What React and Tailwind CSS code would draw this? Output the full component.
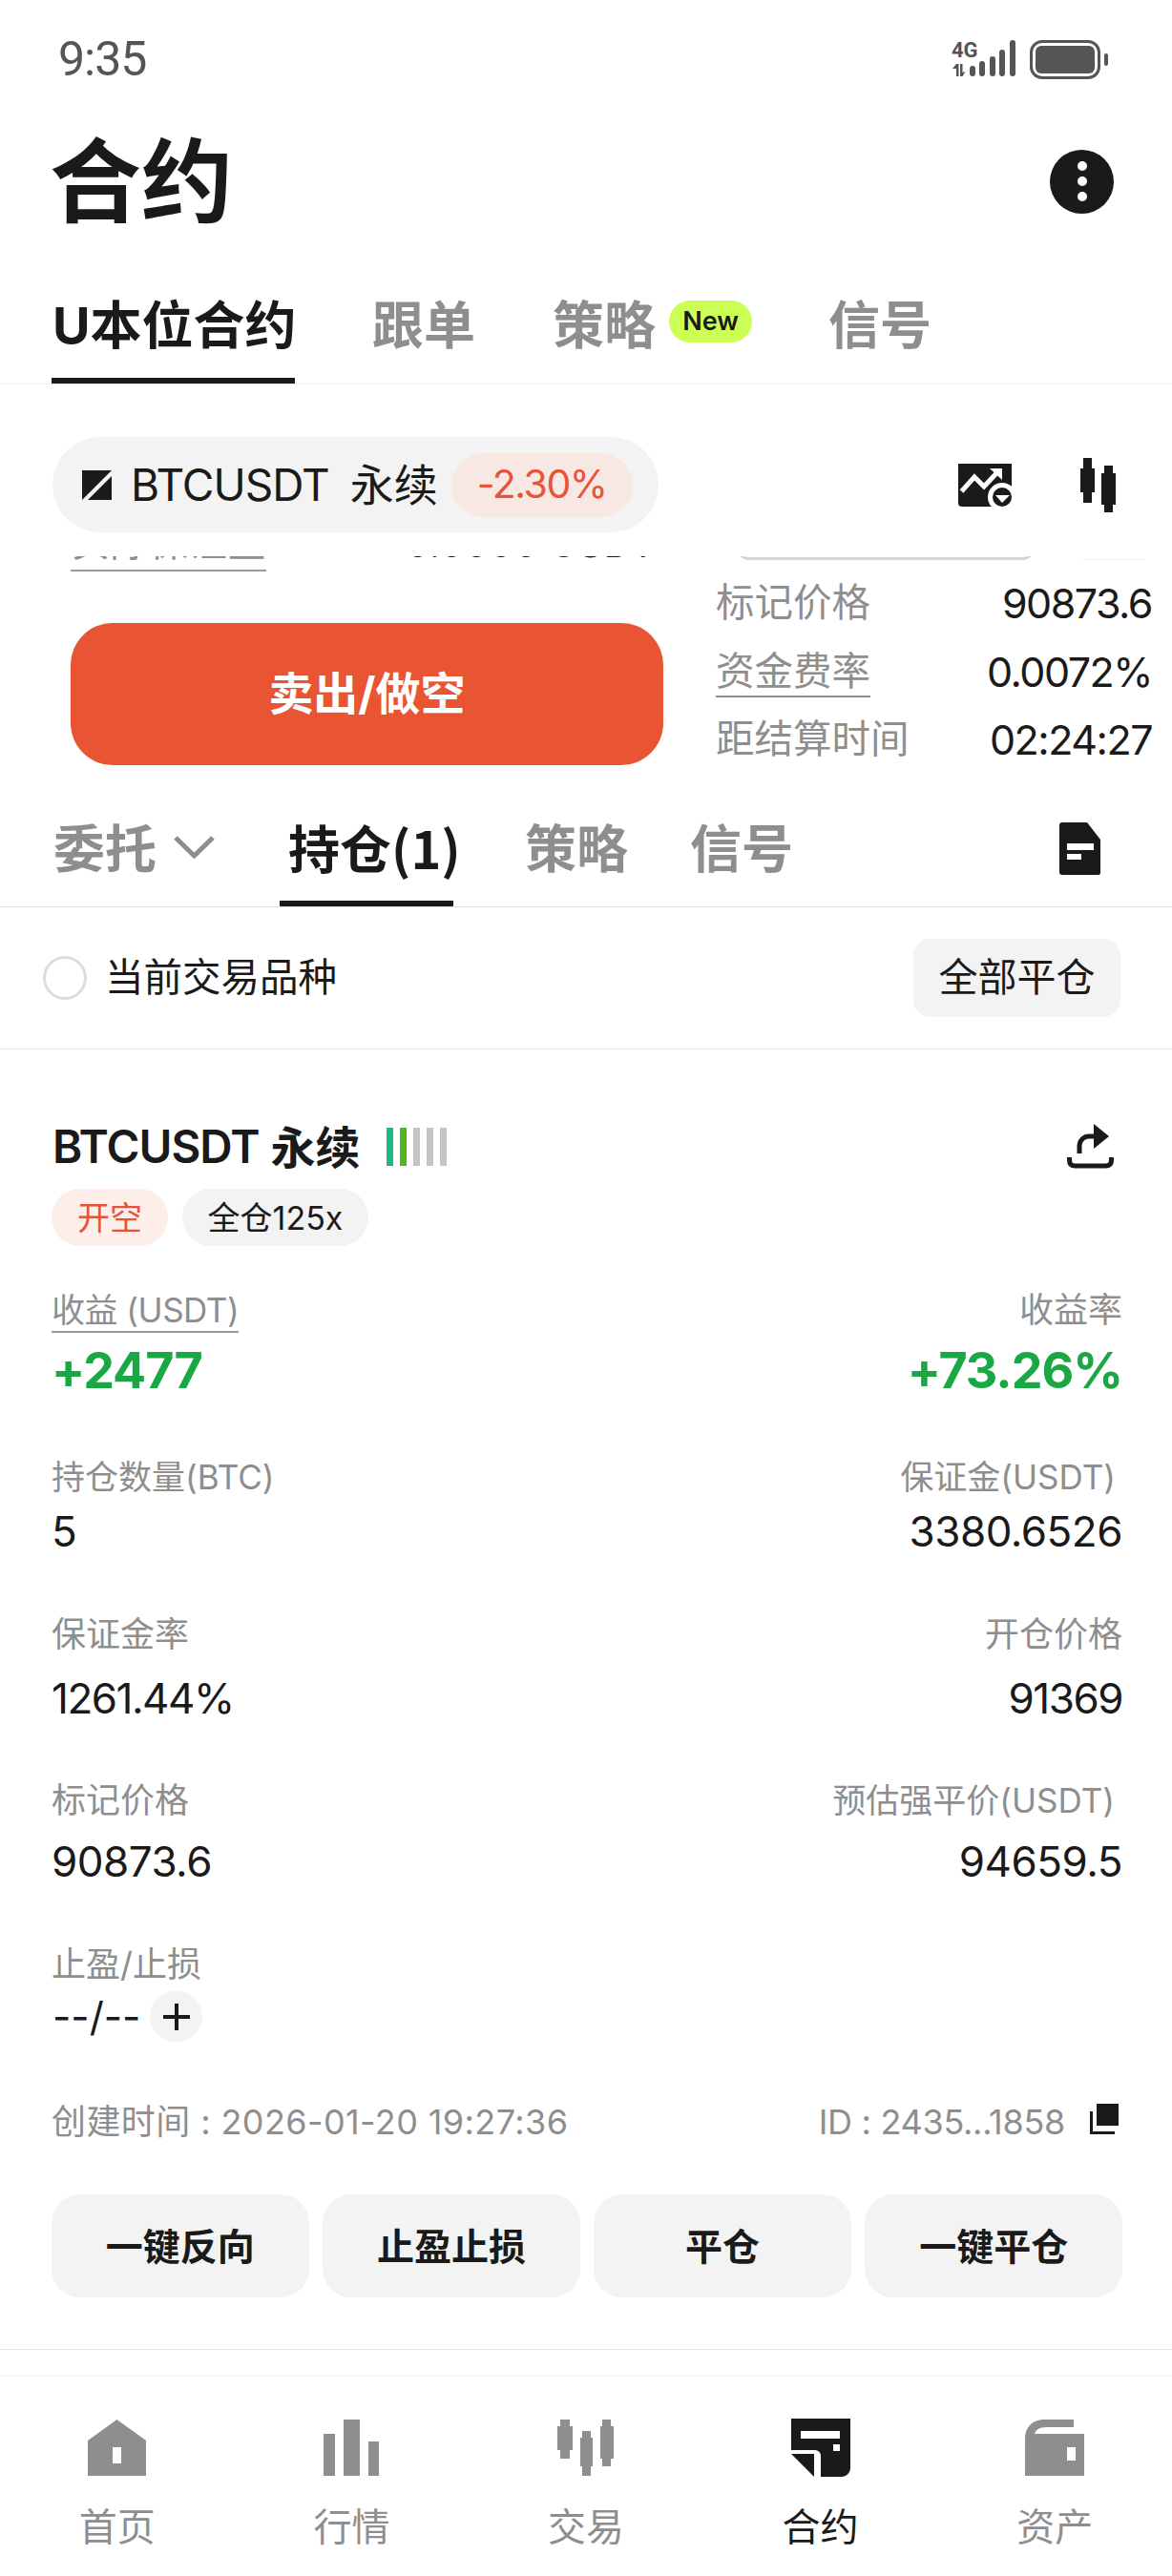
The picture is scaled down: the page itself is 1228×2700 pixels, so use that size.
import React from 'react';

const Candle = ({ className }) => (
  <svg viewBox="0 0 37 57" className={className} fill="currentColor" shapeRendering="crispEdges">
    <path d="M3 0h9v11h3v25h-3v11H3V36H0V11h3z" />
    <path d="M25 8h9v8h3v33h-3v8h-9v-8h-3V16h3z" />
  </svg>
);

const ChartIcon = () => (
  <svg viewBox="0 0 56 45" className="w-[56px] h-[45px]">
    <path d="M0 0h56v45H4a4 4 0 0 1-4-4z" fill="#1a1a1a" />
    <path d="M3.500 29L17 14l10 10L42 8" fill="none" stroke="#fff" strokeWidth="5" />
    <path d="M33 5h13v12z" fill="#fff" />
    <circle cx="46" cy="35" r="15" fill="#fff" />
    <circle cx="46" cy="35" r="10" fill="#1a1a1a" />
    <path d="M39 33h15l-8 8z" fill="#fff" />
  </svg>
);

const DocIcon = () => (
  <svg viewBox="0 0 43 55" className="w-[43px] h-[55px]">
    <path d="M3 0h26l14 18v35a2 2 0 0 1-2 2H3a3 3 0 0 1-3-3V3a3 3 0 0 1 3-3z" fill="#1a1a1a" />
    <rect x="8" y="22" width="28" height="7" fill="#fff" />
    <rect x="8" y="33" width="15" height="6" fill="#fff" />
  </svg>
);

const ShareIcon = () => (
  <svg viewBox="0 0 49 48" className="w-[49px] h-[48px]">
    <path d="M28 0l16 13-16 13z" fill="#1a1a1a" />
    <path d="M13 31v-8c0-6 5-10 10-10h7" fill="none" stroke="#1a1a1a" strokeWidth="5" />
    <path d="M2.500 35v3c0 4 2 6 6 6h32c4 0 6-2 6-6v-3" fill="none" stroke="#1a1a1a" strokeWidth="5" />
  </svg>
);

const CopyIcon = () => (
  <svg viewBox="0 0 30 32" className="w-[30px] h-[32px]">
    <rect x="7" y="0" width="23" height="23" fill="#1a1a1a" />
    <path d="M1.500 8v22.500H26" fill="none" stroke="#1a1a1a" strokeWidth="3" />
  </svg>
);

const SignalIcon = () => (
  <svg viewBox="0 0 70 40" className="w-[70px] h-[40px] overflow-visible" fill="#555">
    <text x="0" y="18" fontSize="22" fontWeight="700" fontFamily="Roboto, sans-serif" fill="#555">4G</text>
    <path d="M5 25v13h2.500V25zM5 25l-4 5h4zM9 38V25h2.500v9l3-1-3 5z" />
    <rect x="19" y="27" width="6" height="11" rx="3" />
    <rect x="29" y="22" width="6" height="16" rx="3" />
    <rect x="40" y="17" width="6" height="21" rx="3" />
    <rect x="50" y="10" width="6" height="28" rx="3" />
    <rect x="61" y="0" width="6" height="38" rx="3" />
  </svg>
);

const HomeIcon = () => (
  <svg viewBox="0 0 61 59" className="w-[61px] h-[59px]">
    <path fillRule="evenodd" d="M30.500 0L61 22v37H0V22zM26 29v17h9V29z" fill="#8e8e8e" />
  </svg>
);

const BarsIcon = () => (
  <svg viewBox="0 0 58 59" className="w-[58px] h-[59px]" fill="#8e8e8e">
    <rect x="0" y="15" width="12" height="44" />
    <rect x="21" y="0" width="17" height="59" />
    <rect x="47" y="23" width="11" height="36" />
  </svg>
);

const TradeIcon = () => (
  <svg viewBox="0 0 59 59" className="w-[59px] h-[59px]" fill="#8e8e8e" shapeRendering="crispEdges">
    <path d="M3 0h10v7h3v25h-3v9H3v-9H0V7h3z" />
    <path d="M26 12h9v7h2v30h-2v10h-9V49h-2V19h2z" />
    <path d="M47 0h9v7h3v34h-3v8h-9v-8h-2V7h2z" />
  </svg>
);

const ContractIcon = () => (
  <svg viewBox="0 0 62 61" className="w-[62px] h-[61px]">
    <path fillRule="evenodd" d="M0 0h62v52a9 9 0 0 1-9 9H31V39a6 6 0 0 0-6-6H0zM10 13v8h41v-8zM44 27v7h7v-7z" fill="#1a1a1a" />
    <path d="M0 37h24v24z" fill="#1a1a1a" />
  </svg>
);

const WalletIcon = () => (
  <svg viewBox="0 0 62 59" className="w-[62px] h-[59px]">
    <path fillRule="evenodd" d="M0 59V20C0 8 8 0 20 0h31v8H22c-7 0-11 3-12 7h52v44zM44 29v14h9V29z" fill="#8e8e8e" />
  </svg>
);

const navItems = [
  { label: '首页', icon: <HomeIcon /> },
  { label: '行情', icon: <BarsIcon /> },
  { label: '交易', icon: <TradeIcon /> },
  { label: '合约', icon: <ContractIcon />, active: true },
  { label: '资产', icon: <WalletIcon /> },
];

const ActionButton = ({ children }) => (
  <div className="h-[108px] pt-[2px] rounded-[30px] bg-[#f3f3f3] flex items-center justify-center text-[39px] font-bold text-[#1a1a1a]">
    {children}
  </div>
);

const InfoRow = ({ label, value, underline }) => (
  <div className="h-[71.500px] flex justify-between items-start text-[40.500px] leading-[50px]">
    <span className={`text-[#8e8e8e] ${underline ? 'border-b-2 border-[#8e8e8e]' : ''}`}>{label}</span>
    <span className="text-[43px] text-[#1a1a1a] tracking-[-1.500px]">{value}</span>
  </div>
);

export default function App() {
  return (
    <div className="w-[1228px] h-[2700px] overflow-hidden bg-white flex flex-col text-[#1a1a1a] font-['Inter','Noto_Sans_CJK_SC',sans-serif]">
      {/* status bar */}
      <div className="h-[124px] flex items-center justify-between pl-[61px] pr-[67px] shrink-0">
        <span className="font-['Roboto'] text-[50px] text-[#555] tracking-[-1px]">9:35</span>
        <div className="flex items-center gap-[12px]">
          <SignalIcon />
          <div className="w-[74px] h-[41px] border-[3px] border-[#555] rounded-[13px] p-[3px]">
            <div className="w-full h-full bg-[#555] rounded-[6px]" />
          </div>
          <div className="w-[4px] h-[13px] bg-[#555] rounded-full -ml-[8px]" />
        </div>
      </div>

      {/* title */}
      <div className="h-[132px] flex items-center justify-between pl-[52px] pr-[61px] shrink-0">
        <h1 className="text-[96px] font-bold leading-none">合约</h1>
        <div className="w-[67px] h-[67px] rounded-full bg-[#1a1a1a] flex flex-col items-center justify-center gap-[6px]">
          <span className="w-[10px] h-[10px] rounded-full bg-white" />
          <span className="w-[10px] h-[10px] rounded-full bg-white" />
          <span className="w-[10px] h-[10px] rounded-full bg-white" />
        </div>
      </div>

      {/* top tabs */}
      <div className="h-[147px] shrink-0 border-b border-[#f0f0f0] flex items-end pl-[54px] text-[54px] leading-[54px] font-bold">
        <div className="w-[255px] h-[87px] border-b-[6px] border-[#1a1a1a] pl-[1px] whitespace-nowrap">U本位合约</div>
        <div className="ml-[81px] h-[87px] text-[#8e8e8e]">跟单</div>
        <div className="ml-[81px] h-[87px] text-[#8e8e8e] flex items-start">
          <span>策略</span>
          <span className="ml-[14px] w-[87px] h-[44px] rounded-full bg-[#ccff55] text-[#1a1a1a] text-[27px] leading-[44px] font-semibold text-center">New</span>
        </div>
        <div className="ml-[80px] h-[87px] text-[#8e8e8e]">信号</div>
      </div>

      {/* symbol bar */}
      <div className="h-[180px] shrink-0 flex items-start justify-between pt-[55px] pl-[55px] pr-[59px]">
        <div className="w-[635px] h-[100px] rounded-full bg-[#f3f3f3] flex items-center pl-[31px]">
          <svg viewBox="0 0 31 31" className="w-[31px] h-[31px]">
            <path d="M0 0h31L0 31z" fill="#1a1a1a" />
            <path d="M31 6v25H6z" fill="#1a1a1a" />
          </svg>
          <span className="ml-[20px] text-[46px] tracking-[-1px] whitespace-nowrap">BTCUSDT</span>
          <span className="ml-[22px] text-[46px] whitespace-nowrap">永续</span>
          <span className="ml-[14px] w-[190px] h-[67px] rounded-full bg-[#f8e8e3] text-[#e8543a] text-[41px] tracking-[-1.500px] flex items-center justify-center">-2.30%</span>
        </div>
        <div className="flex items-center pt-[22px]">
          <ChartIcon />
          <Candle className="ml-[72px] w-[37px] h-[57px] text-[#1a1a1a]" />
        </div>
      </div>

      {/* order form, scrolled under the symbol bar */}
      <div className="h-[272px] shrink-0 overflow-hidden flex pl-[74px] pr-[21px]">
        <div className="w-[621px] shrink-0">
          <div className="-mt-[40px] h-[110px] flex items-start justify-between text-[41px] leading-[50px]">
            <span className="text-[#8e8e8e] border-b-2 border-[#9a9a9a] pb-[4px] whitespace-nowrap">实际保证金</span>
            <span className="text-[#1a1a1a] mt-[1px] pr-[8px] whitespace-nowrap">0.0000 USDT</span>
          </div>
          <div className="h-[149px] rounded-[44px] bg-[#e95432] flex items-center justify-center text-white text-[47px] font-bold">
            卖出/做空
          </div>
        </div>
        <div className="ml-[55px] flex-1 relative">
          <div className="absolute left-[21px] -top-[40px] w-[314px] h-[44px] rounded-b-[14px] border-b-[3px] border-[#d4d4d4]" />
          <div className="absolute left-[385px] top-[3px] w-[65px] border-b-[1px] border-[#eeeeee]" />
          <div className="pt-[24px]">
            <InfoRow label="标记价格" value="90873.6" />
            <InfoRow label="资金费率" value="0.0072%" underline />
            <InfoRow label="距结算时间" value="02:24:27" />
          </div>
        </div>
      </div>

      {/* position tabs */}
      <div className="h-[96px] shrink-0 border-b border-[#e0e0e0] flex items-start pl-[56px] pr-[75px] pt-[9px] text-[54px] leading-[54px] font-bold">
        <div className="text-[#8e8e8e] flex items-start">
          <span>委托</span>
          <svg viewBox="0 0 43 24" className="ml-[18px] mt-[12px] w-[43px] h-[24px]">
            <path d="M2 2l19.500 19L41 2" fill="none" stroke="#8e8e8e" strokeWidth="5" />
          </svg>
        </div>
        <div className="ml-[68px] w-[182px] h-[86px] border-b-[6px] border-[#1a1a1a] pl-[9px] leading-[48px] whitespace-nowrap font-['Noto_Sans_CJK_SC']">持仓(1)</div>
        <div className="ml-[75px] text-[#8e8e8e]">策略</div>
        <div className="ml-[65px] text-[#8e8e8e]">信号</div>
        <div className="ml-auto -mt-[2px]"><DocIcon /></div>
      </div>

      {/* filter */}
      <div className="h-[149px] shrink-0 border-b border-[#e4e4e4] flex items-center justify-between pl-[45px] pr-[54px]">
        <div className="flex items-center">
          <span className="w-[46px] h-[46px] rounded-full border-[3px] border-[#dcdcdc]" />
          <span className="ml-[19px] text-[40.500px]">当前交易品种</span>
        </div>
        <div className="w-[217px] h-[82px] rounded-[18px] bg-[#f3f3f3] flex items-center justify-center text-[41px]">全部平仓</div>
      </div>

      {/* position card */}
      <div className="shrink-0 pl-[54px] pr-[52px] pt-[78px] pb-[54px] border-b border-[#e2e2e2]">
        <div className="h-[48px] flex items-center justify-between">
          <div className="flex items-center pl-[1px]">
            <span className="text-[47.500px] font-semibold leading-none tracking-[-1px] whitespace-nowrap">BTCUSDT</span>
            <span className="ml-[12px] text-[47px] font-bold leading-none">永续</span>
            <div className="ml-[27px] flex gap-[7px]">
              <span className="w-[7px] h-[40px] bg-[#1db885]" />
              <span className="w-[7px] h-[40px] bg-[#4cb81e]" />
              <span className="w-[7px] h-[40px] bg-[#c4c4c4]" />
              <span className="w-[7px] h-[40px] bg-[#c4c4c4]" />
              <span className="w-[7px] h-[40px] bg-[#c4c4c4]" />
            </div>
          </div>
          <div className="pr-[9px]"><ShareIcon /></div>
        </div>

        <div className="mt-[20px] flex gap-[15px]">
          <span className="w-[122px] h-[60px] rounded-full bg-[#fdeeea] text-[#e5533a] text-[34px] flex items-center justify-center">开空</span>
          <span className="w-[195px] h-[60px] rounded-full bg-[#f3f3f3] text-[34px] flex items-center justify-center whitespace-nowrap">全仓125x</span>
        </div>

        {/* pnl */}
        <div className="mt-[45px] flex justify-between">
          <div>
            <div className="inline-block h-[46px] border-b-2 border-[#9a9a9a] text-[35px] leading-[44px] text-[#8e8e8e] tracking-[-0.500px]">收益 (USDT)</div>
          </div>
          <div className="text-[36px] leading-[44px] text-[#8e8e8e]">收益率</div>
        </div>
        <div className="mt-[15px] flex justify-between text-[52px] leading-[50px] font-bold text-[#1aa844] tracking-[-1px]">
          <span>+2477</span>
          <span>+73.26%</span>
        </div>

        <div className="mt-[64px] flex justify-between text-[35px] leading-[44px] text-[#8e8e8e]">
          <span>持仓数量(BTC)</span>
          <span className="pr-[7px]">保证金(USDT)</span>
        </div>
        <div className="mt-[10px] flex justify-between text-[44px] leading-[50px] tracking-[-0.500px]">
          <span>5</span>
          <span>3380.6526</span>
        </div>

        <div className="mt-[61px] flex justify-between text-[36px] leading-[44px] text-[#8e8e8e]">
          <span>保证金率</span>
          <span>开仓价格</span>
        </div>
        <div className="mt-[20px] flex justify-between text-[44px] leading-[50px] tracking-[-1.500px]">
          <span>1261.44%</span>
          <span>91369</span>
        </div>

        <div className="mt-[60px] flex justify-between text-[35px] leading-[44px] text-[#8e8e8e]">
          <span className="text-[36px]">标记价格</span>
          <span className="pr-[8px]">预估强平价(USDT)</span>
        </div>
        <div className="mt-[17px] flex justify-between text-[44px] leading-[50px] tracking-[-0.500px]">
          <span>90873.6</span>
          <span>94659.5</span>
        </div>

        <div className="mt-[61px] text-[36px] leading-[44px] text-[#8e8e8e]">止盈/止损</div>
        <div className="mt-[6px] h-[53px] flex items-center text-[42px]">
          <span className="pl-[1px]">--/--</span>
          <span className="ml-[10px] w-[55px] h-[53px] rounded-full bg-[#f3f3f3] flex items-center justify-center">
            <svg viewBox="0 0 28 28" className="w-[28px] h-[28px]">
              <path d="M0 14h28M14 0v28" stroke="#1a1a1a" strokeWidth="4" />
            </svg>
          </span>
        </div>

        <div className="mt-[62px] h-[44px] flex items-center justify-between text-[36px] text-[#8e8e8e]">
          <span className="tracking-[0.400px]">创建时间 : 2026-01-20 19:27:36</span>
          <span className="flex items-center tracking-[-0.300px]">
            ID : 2435...1858
            <span className="ml-[26px] mr-[4px] -mt-[6px]"><CopyIcon /></span>
          </span>
        </div>

        <div className="mt-[54px] grid grid-cols-4 gap-[14.500px]">
          <ActionButton>一键反向</ActionButton>
          <ActionButton>止盈止损</ActionButton>
          <ActionButton>平仓</ActionButton>
          <ActionButton>一键平仓</ActionButton>
        </div>
      </div>

      {/* bottom nav */}
      <div className="mt-[27px] flex-1 border-t border-[#f0f0f0] grid grid-cols-5 pt-[44px]">
        {navItems.map((item) => (
          <div key={item.label} className="flex flex-col items-center">
            <div className="h-[61px] flex items-center justify-center">{item.icon}</div>
            <span className={`mt-[28px] text-[40px] leading-[50px] ${item.active ? 'text-[#1a1a1a]' : 'text-[#8e8e8e]'}`}>{item.label}</span>
          </div>
        ))}
      </div>
    </div>
  );
}
